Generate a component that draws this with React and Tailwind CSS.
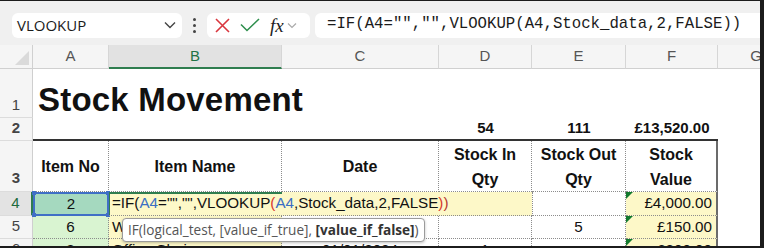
import React from "react";

const cols = [
  { key: "A", w: "w-[76px]" },
  { key: "B", w: "w-[173px]" },
  { key: "C", w: "w-[157px]" },
  { key: "D", w: "w-[93px]" },
  { key: "E", w: "w-[94px]" },
  { key: "F", w: "w-[92px]" },
];

const font = { fontFamily: '"Liberation Sans", Arial, sans-serif' };

function RowHead({ n, h, active }) {
  return (
    <div
      className={`w-[33px] ${h} shrink-0 flex items-end justify-center pb-[1px] text-[15px] border-b border-[#dcdcdc] ${
        active
          ? "bg-[#e3e3e3] text-[#1e6b3d] border-r-2 border-r-[#2f7d4f]"
          : "bg-[#f5f5f5] text-[#444] border-r border-r-[#cfcfcf]"
      }`}
    >
      {n}
    </div>
  );
}

function Tri() {
  return (
    <span className="absolute left-0 top-0 w-0 h-0 border-t-[7px] border-t-[#137a2e] border-r-[7px] border-r-transparent" />
  );
}

const cell = "border-r border-b border-dotted border-[#8c8c8c] flex items-center shrink-0";
const lastCell = "[border-right-style:solid] border-r-2 border-r-[#6b6b6b]";

export default function App() {
  return (
    <div
      className="w-[764px] h-[248px] overflow-hidden bg-white border-t border-r-4 border-b-2 border-[#1c1c1c] relative"
      style={font}
    >
      {/* formula bar */}
      <div className="h-[44px] bg-[#f0f0f0] flex items-center pl-3 pt-[4px]">
        <div className="w-[170px] h-[25px] bg-white rounded-md flex items-center justify-between pl-[5px] pr-[6px]">
          <span className="text-[15px] text-[#1b1b1b]" style={{ fontFamily: '"Open Sans", sans-serif' }}>
            VLOOKUP
          </span>
          <svg width="12" height="8" viewBox="0 0 12 8">
            <path d="M1 1.5 L6 6.5 L11 1.5" fill="none" stroke="#444" strokeWidth="1.4" />
          </svg>
        </div>
        <div className="w-[25px] flex flex-col items-center gap-[3px]">
          <span className="w-[3px] h-[3px] rounded-full bg-[#444]" />
          <span className="w-[3px] h-[3px] rounded-full bg-[#444]" />
          <span className="w-[3px] h-[3px] rounded-full bg-[#444]" />
        </div>
        <div className="w-[103px] h-[25px] bg-white rounded-md flex items-center pl-[8px] gap-[10px]">
          <svg width="15" height="15" viewBox="0 0 15 15">
            <path d="M1 1 L14 14 M14 1 L1 14" stroke="#d9363e" strokeWidth="1.6" />
          </svg>
          <svg width="20" height="14" viewBox="0 0 20 14">
            <path d="M1 6.5 L7 12.5 L19 1" fill="none" stroke="#2f8f4e" strokeWidth="1.6" />
          </svg>
          <div className="flex items-center gap-[3px]">
            <span className="italic text-[19px] leading-none text-[#222]" style={{ fontFamily: '"Liberation Serif", serif' }}>
              fx
            </span>
            <svg width="10" height="7" viewBox="0 0 10 7">
              <path d="M1 1.5 L5 5.5 L9 1.5" fill="none" stroke="#aaa" strokeWidth="1.2" />
            </svg>
          </div>
        </div>
        <div className="flex-1 h-[25px] bg-white rounded-l-md ml-[5px] flex items-center pl-[12px]">
          <span className="text-[15.7px] text-[#1b1b1b] whitespace-pre" style={{ fontFamily: '"Liberation Mono", monospace' }}>
            =IF(A4="","",VLOOKUP(A4,Stock_data,2,FALSE))
          </span>
        </div>
      </div>

      {/* column headers */}
      <div className="flex h-[24px] bg-[#f5f5f5] text-[15px] text-[#555]">
        <div className="w-[33px] shrink-0 relative border-r border-b border-[#d0d0d0]">
          <span className="absolute right-[3px] bottom-[3px] w-0 h-0 border-l-[14px] border-l-transparent border-b-[14px] border-b-[#dadada]" />
        </div>
        {cols.map((c) => (
          <div
            key={c.key}
            className={`${c.w} shrink-0 flex items-center justify-center border-r border-[#d6d6d6] ${
              c.key === "B"
                ? "bg-[#e2e2e2] text-[#217346] border-b-2 border-b-[#2f7d4f]"
                : "border-b border-b-[#d0d0d0]"
            }`}
          >
            {c.key}
          </div>
        ))}
        <div className="w-[76px] shrink-0 flex items-center justify-center border-b border-[#d0d0d0]">G</div>
      </div>

      {/* row 1 */}
      <div className="flex h-[49px]">
        <RowHead n="1" h="h-[49px]" />
        <div className="flex-1 flex items-end pl-[5px] pb-[2px]">
          <span className="text-[33px] font-bold text-[#111] leading-none tracking-[0.2px]">Stock Movement</span>
        </div>
      </div>

      {/* row 2 */}
      <div className="flex h-[23px] text-[15px] font-bold text-[#111]">
        <RowHead n="2" h="h-[23px]" />
        <div className="w-[76px] shrink-0 border-b-2 border-[#333]" />
        <div className="w-[173px] shrink-0 border-b-2 border-[#333]" />
        <div className="w-[157px] shrink-0 border-b-2 border-[#333]" />
        <div className="w-[93px] shrink-0 border-b-2 border-[#333] flex items-end justify-center">54</div>
        <div className="w-[94px] shrink-0 border-b-2 border-[#333] flex items-end justify-center">111</div>
        <div className="w-[92px] shrink-0 border-b-2 border-[#333] flex items-end justify-center">£13,520.00</div>
      </div>

      {/* row 3 */}
      <div className="flex h-[51px] text-[16px] font-bold text-[#111] leading-[25px]">
        <RowHead n="3" h="h-[51px]" />
        <div className={`${cell} w-[76px] justify-center`}>Item No</div>
        <div className={`${cell} w-[173px] justify-center`}>Item Name</div>
        <div className={`${cell} w-[157px] justify-center`}>Date</div>
        <div className={`${cell} w-[93px] justify-center text-center pt-[2px]`}>
          Stock In
          <br />
          Qty
        </div>
        <div className={`${cell} w-[94px] justify-center text-center pt-[2px]`}>
          Stock Out
          <br />
          Qty
        </div>
        <div className={`${cell} ${lastCell} w-[92px] justify-center text-center pt-[2px]`}>
          Stock
          <br />
          Value
        </div>
      </div>

      {/* row 4 */}
      <div className="flex h-[24px] text-[15.2px] text-[#111]">
        <RowHead n="4" h="h-[24px]" active />
        <div className="w-[76px] shrink-0 relative bg-[#a5d9bf] border-2 border-[#3f6fc6] flex items-center justify-center">
          2
          <span className="absolute -left-[3px] -top-[3px] w-[4px] h-[4px] bg-[#3f6fc6]" />
          <span className="absolute -right-[3px] -top-[3px] w-[4px] h-[4px] bg-[#3f6fc6]" />
          <span className="absolute -left-[3px] -bottom-[3px] w-[4px] h-[4px] bg-[#3f6fc6]" />
          <span className="absolute -right-[3px] -bottom-[3px] w-[4px] h-[4px] bg-[#3f6fc6]" />
        </div>
        <div className="w-[423px] shrink-0 relative bg-[#fdf8c8] border-b border-dotted border-[#8c8c8c] flex items-center">
          <span className="absolute left-0 top-0 w-[173px] h-[2px] bg-[#2f7d4f]" />
          <span className="absolute left-0 top-0 w-[1px] h-full bg-[#2f7d4f]" />
          <span className="pl-[3px] whitespace-pre">
            =IF(<span className="text-[#3a6fc4]">A4</span>="","",VLOOKUP
            <span className="text-[#d9362b]">(</span>
            <span className="text-[#3a6fc4]">A4</span>,Stock_data,2,FALSE
            <span className="text-[#d9362b]">)</span>
            <span className="text-[#b4372f]">)</span>
          </span>
        </div>
        <div className={`${cell} w-[94px] border-l border-l-[#8c8c8c]`} />
        <div className={`${cell} ${lastCell} w-[92px] relative bg-[#fdf8c8] justify-end pr-[4px]`}>
          <Tri />
          £4,000.00
        </div>
      </div>

      {/* row 5 */}
      <div className="flex h-[23px] text-[15.2px] text-[#111]">
        <RowHead n="5" h="h-[23px]" />
        <div className={`${cell} w-[76px] bg-[#d9f4d1] justify-center`}>6</div>
        <div className={`${cell} w-[173px] bg-[#fdf8c8] pl-[3px]`}>Wireless Mouse</div>
        <div className={`${cell} w-[157px]`} />
        <div className={`${cell} w-[93px]`} />
        <div className={`${cell} w-[94px] justify-center`}>5</div>
        <div className={`${cell} ${lastCell} w-[92px] relative bg-[#fdf8c8] justify-end pr-[4px]`}>
          <Tri />
          £150.00
        </div>
      </div>

      {/* row 6 */}
      <div className="flex h-[23px] text-[15.2px] text-[#111]">
        <RowHead n="6" h="h-[23px]" />
        <div className={`${cell} w-[76px] bg-[#d9f4d1] justify-center`}>8</div>
        <div className={`${cell} w-[173px] bg-[#fdf8c8] pl-[3px]`}>Office Chair</div>
        <div className={`${cell} w-[157px] justify-center`}>01/01/2024</div>
        <div className={`${cell} w-[93px] justify-center`}>1</div>
        <div className={`${cell} w-[94px]`} />
        <div className={`${cell} ${lastCell} w-[92px] relative bg-[#fdf8c8] justify-end pr-[4px]`}>
          <Tri />
          £800.00
        </div>
      </div>

      {/* function tooltip */}
      <div
        className="absolute left-[122px] top-[217px] h-[24px] px-[5px] flex items-center bg-white border border-[#9b9b9b] rounded-[4px] shadow-[0_1px_3px_rgba(0,0,0,0.25)] text-[13.6px] text-[#555] whitespace-pre"
        style={{ fontFamily: '"Open Sans", sans-serif' }}
      >
        IF(logical_test, [value_if_true], <span className="font-bold text-[#333]">[value_if_false]</span>)
      </div>
    </div>
  );
}
